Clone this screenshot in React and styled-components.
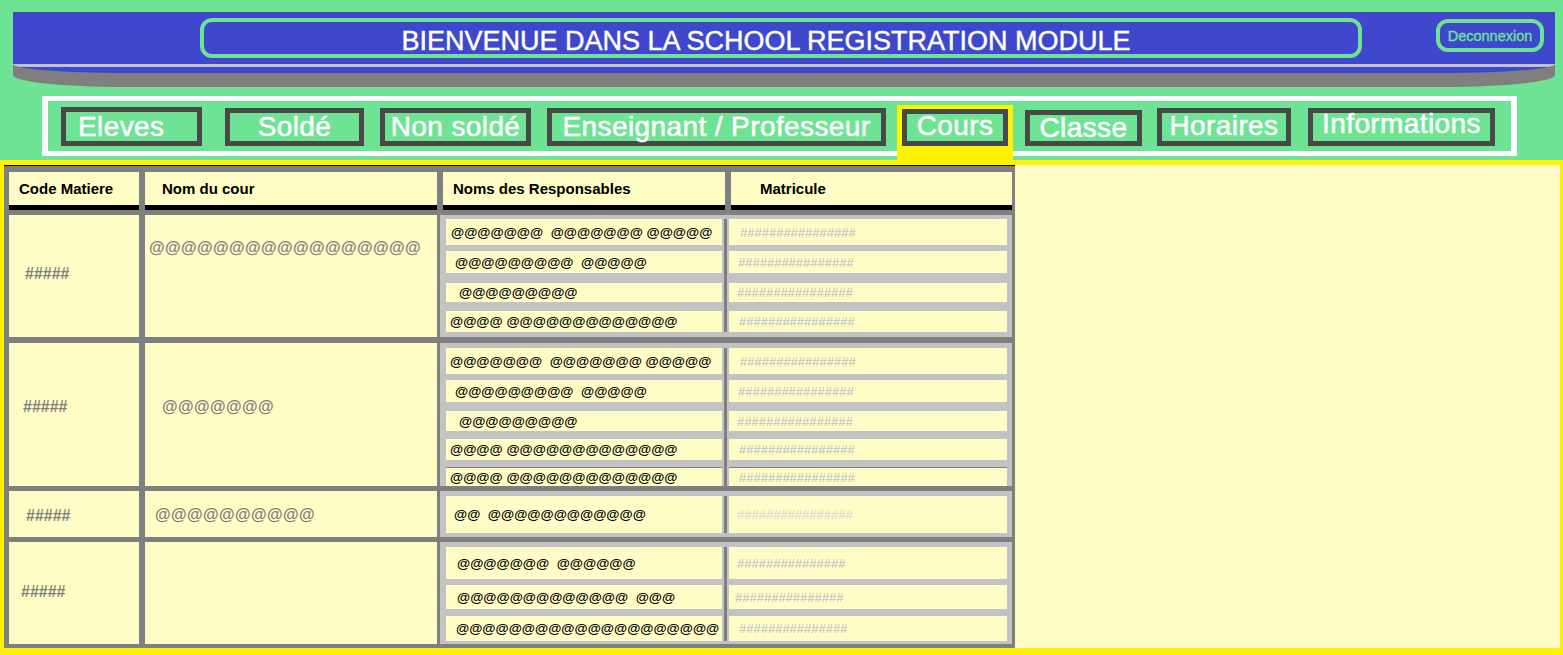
import React from 'react';
import styled, { createGlobalStyle } from 'styled-components';

const GREEN = '#6fe394';
const BLUE = '#3f48cc';
const YELLOW = '#fff200';
const CREAM = '#fffdc5';
const GRAY = '#7f7f7f';
const LIGHT = '#c3c3c3';
const DARK = '#484848';
const FONT = '"Liberation Sans", Arial, sans-serif';

const Global = createGlobalStyle`
  html, body { margin: 0; padding: 0; }
  body {
    background: ${GREEN};
    font-family: ${FONT};
    overflow: hidden;
  }
`;

const Page = styled.div`
  width: 1563px;
  height: 655px;
  display: flex;
  flex-direction: column;
`;

const HeaderShell = styled.header`
  margin: 12px 0 0 13px;
  width: 1542px;
  height: 75px;
  background: ${GRAY};
  border-radius: 0 0 110px 110px / 0 0 12px 12px;
`;

const BluePanel = styled.div`
  height: 61px;
  box-sizing: border-box;
  background: linear-gradient(
    to bottom,
    ${BLUE} 0 52px,
    ${LIGHT} 52px 55px,
    ${BLUE} 55px 61px
  );
  border-radius: 0 0 110px 110px / 0 0 9px 9px;
  display: flex;
  align-items: flex-start;
  padding: 6px 11px 0 187px;
`;

const TitlePill = styled.h1`
  margin: 0;
  width: 1162px;
  height: 40px;
  box-sizing: border-box;
  border: 4px solid ${GREEN};
  border-radius: 12px;
  display: flex;
  align-items: center;
  justify-content: center;
  padding: 6px 30px 0 0;
  color: #fff;
  font-family: ${FONT};
  font-weight: 400;
  font-size: 27px;
  -webkit-text-stroke: 0.4px #fff;
  white-space: nowrap;
`;

const LogoutPill = styled.button`
  margin: 1px 0 0 auto;
  width: 108px;
  height: 33px;
  box-sizing: border-box;
  border: 4px solid ${GREEN};
  border-radius: 12px;
  background: transparent;
  color: ${GREEN};
  font-family: ${FONT};
  font-size: 14.5px;
  -webkit-text-stroke: 0.3px ${GREEN};
  padding: 0;
  display: flex;
  align-items: center;
  justify-content: center;
`;

const Nav = styled.nav`
  margin: 9px 0 0 42px;
  width: 1475px;
  height: 60px;
  box-sizing: border-box;
  border: 5px solid #fff;
  border-left-width: 6px;
  border-right-width: 6px;
  display: flex;
  align-items: flex-end;
  padding: 0 16px 5px 13px;
`;

const NavButton = styled.button`
  flex: none;
  margin-left: ${(p) => p.$ml || 0}px;
  width: ${(p) => p.$w}px;
  height: ${(p) => p.$h}px;
  box-sizing: border-box;
  border: 5px solid ${DARK};
  background: ${GREEN};
  color: #fff;
  font-family: ${FONT};
  font-size: 28px;
  letter-spacing: 0.4px;
  -webkit-text-stroke: 0.5px #fff;
  line-height: 1;
  display: flex;
  align-items: center;
  justify-content: ${(p) => (p.$left ? 'flex-start' : 'center')};
  padding: 0 0 ${(p) => p.$up || 0}px ${(p) => (p.$left ? 12 : 0)}px;
  white-space: nowrap;
`;

const ActiveTab = styled.div`
  flex: none;
  display: flex;
  margin-left: ${(p) => p.$ml}px;
  margin-bottom: -14px;
  padding: 4px 5px 14px;
  background: ${YELLOW};
`;

const Frame = styled.main`
  margin-top: 4px;
  width: 1563px;
  height: 495px;
  box-sizing: border-box;
  border-style: solid;
  border-color: ${YELLOW};
  border-width: 5px 3px 7px 4px;
  background: ${CREAM};
  display: flex;
  align-items: flex-start;
`;

const Table = styled.div`
  width: 1011px;
  height: 483px;
  box-sizing: border-box;
  background: ${GRAY};
  border-top: 1px solid #000;
  padding: 6px 3px 4px 5px;
  display: flex;
  flex-direction: column;
`;

const HeadRow = styled.div`
  display: flex;
  gap: 6px;
`;

const HeadCell = styled.div`
  width: ${(p) => p.$w}px;
  height: 38px;
  box-sizing: border-box;
  background: ${CREAM};
  border-bottom: 5px solid #000;
  padding-left: ${(p) => p.$pl}px;
  display: flex;
  align-items: center;
  font-weight: 700;
  font-size: 15px;
  color: #000;
`;

const Row = styled.div`
  display: flex;
  height: ${(p) => p.$h}px;
  margin-top: ${(p) => p.$mt}px;
`;

const CodeCell = styled.div`
  width: 130px;
  box-sizing: border-box;
  background: ${CREAM};
  padding: ${(p) => p.$pt}px 0 0 ${(p) => p.$pl}px;
  font-weight: 700;
  font-size: 16px;
  line-height: 18px;
  color: ${GRAY};
`;

const NameCell = styled.div`
  width: 292px;
  margin-left: 6px;
  box-sizing: border-box;
  background: ${CREAM};
  padding: ${(p) => p.$pt}px 0 0 ${(p) => p.$pl}px;
  font-weight: 700;
  font-size: 16px;
  letter-spacing: 0.4px;
  line-height: 18px;
  color: ${GRAY};
  white-space: pre;
`;

const Group = styled.div`
  width: 572px;
  margin-left: 3px;
  box-sizing: border-box;
  background: ${LIGHT};
  display: flex;
  padding: 0 5px 0 6px;
`;

const Col = styled.div`
  width: ${(p) => p.$w}px;
  display: flex;
  flex-direction: column;
`;

const Divider = styled.div`
  width: 3px;
  margin: ${(p) => p.$top}px 2px ${(p) => p.$bottom}px;
  background: ${GRAY};
`;

const SubCell = styled.div`
  flex: none;
  height: ${(p) => p.$h}px;
  margin-top: ${(p) => p.$mt}px;
  box-sizing: border-box;
  background: ${CREAM};
  border-top: ${(p) => (p.$line ? `1px solid ${GRAY}` : 'none')};
  padding-left: ${(p) => p.$pl}px;
  display: flex;
  align-items: center;
  white-space: pre;
`;

const RespText = styled.span`
  font-weight: 700;
  font-size: 13.5px;
  color: #000;
`;

const MatrText = styled.span`
  font-size: 13px;
  color: ${(p) => (p.$faint ? '#d2d2de' : '#b9b9c9')};
`;

const H16 = '################';
const H15 = '###############';

const rows = [
  {
    h: 122,
    mt: 5,
    code: { pl: 16, pt: 50 },
    name: { text: '@@@@@@@@@@@@@@@@@', pl: 4, pt: 24 },
    subs: [
      { mt: 4, h: 26, r: '@@@@@@@  @@@@@@@ @@@@@', rpl: 5, m: H16, mpl: 11 },
      { mt: 6, h: 22, r: '@@@@@@@@@  @@@@@', rpl: 9, m: H16, mpl: 9 },
      { mt: 10, h: 19, r: '@@@@@@@@@', rpl: 13, m: H16, mpl: 8 },
      { mt: 9, h: 21, r: '@@@@ @@@@@@@@@@@@@', rpl: 4, m: H16, mpl: 10 },
    ],
  },
  {
    h: 143,
    mt: 6,
    code: { pl: 14, pt: 55 },
    name: { text: '@@@@@@@', pl: 17, pt: 55 },
    subs: [
      { mt: 5, h: 26, r: '@@@@@@@  @@@@@@@ @@@@@', rpl: 4, m: H16, mpl: 11 },
      { mt: 6, h: 22, r: '@@@@@@@@@  @@@@@', rpl: 9, m: H16, mpl: 9 },
      { mt: 9, h: 20, r: '@@@@@@@@@', rpl: 13, m: H16, mpl: 8 },
      { mt: 8, h: 21, r: '@@@@ @@@@@@@@@@@@@', rpl: 4, m: H16, mpl: 10 },
      { mt: 7, h: 19, r: '@@@@ @@@@@@@@@@@@@', rpl: 4, m: H16, mpl: 10, line: true },
    ],
  },
  {
    h: 46,
    mt: 5,
    code: { pl: 17, pt: 16 },
    name: { text: '@@@@@@@@@@', pl: 10, pt: 15 },
    subs: [{ mt: 5, h: 37, r: '@@  @@@@@@@@@@@@', rpl: 8, m: H16, mpl: 8, faint: true }],
  },
  {
    h: 102,
    mt: 5,
    code: { pl: 12, pt: 41 },
    name: { text: '', pl: 0, pt: 0 },
    subs: [
      { mt: 5, h: 32, r: '@@@@@@@  @@@@@@', rpl: 11, m: H15, mpl: 8 },
      { mt: 6, h: 24, r: '@@@@@@@@@@@@@  @@@', rpl: 11, m: H15, mpl: 6 },
      { mt: 7, h: 25, r: '@@@@@@@@@@@@@@@@@@@@', rpl: 10, m: H15, mpl: 10 },
    ],
  },
];

const navItems = [
  { label: 'Eleves', w: 141, h: 39, ml: 0, left: true },
  { label: 'Soldé', w: 139, h: 38, ml: 23 },
  { label: 'Non soldé', w: 151, h: 38, ml: 16 },
  { label: 'Enseignant / Professeur', w: 339, h: 38, ml: 16 },
  { label: 'Cours', w: 106, h: 37, ml: 11, active: true, up: 4 },
  { label: 'Classe', w: 117, h: 36, ml: 12 },
  { label: 'Horaires', w: 134, h: 38, ml: 15, up: 2 },
  { label: 'Informations', w: 187, h: 38, ml: 17, up: 6 },
];

function GroupBlock({ row }) {
  const used = row.subs.reduce((s, c) => s + c.mt + c.h, 0);
  const top = row.subs[0].mt;
  const bottom = row.h - used;
  return (
    <Group>
      <Col $w={276}>
        {row.subs.map((s, i) => (
          <SubCell key={i} $h={s.h} $mt={s.mt} $pl={s.rpl} $line={s.line}>
            <RespText>{s.r}</RespText>
          </SubCell>
        ))}
      </Col>
      <Divider $top={top} $bottom={bottom} />
      <Col $w={278}>
        {row.subs.map((s, i) => (
          <SubCell key={i} $h={s.h} $mt={s.mt} $pl={s.mpl} $line={s.line}>
            <MatrText $faint={s.faint}>{s.m}</MatrText>
          </SubCell>
        ))}
      </Col>
    </Group>
  );
}

export default function App() {
  return (
    <>
      <Global />
      <Page>
        <HeaderShell>
          <BluePanel>
            <TitlePill>BIENVENUE DANS LA SCHOOL REGISTRATION MODULE</TitlePill>
            <LogoutPill>Deconnexion</LogoutPill>
          </BluePanel>
        </HeaderShell>

        <Nav>
          {navItems.map((n) =>
            n.active ? (
              <ActiveTab key={n.label} $ml={n.ml}>
                <NavButton $w={n.w} $h={n.h} $up={n.up}>
                  {n.label}
                </NavButton>
              </ActiveTab>
            ) : (
              <NavButton key={n.label} $w={n.w} $h={n.h} $ml={n.ml} $left={n.left} $up={n.up}>
                {n.label}
              </NavButton>
            )
          )}
        </Nav>

        <Frame>
          <Table>
            <HeadRow>
              <HeadCell $w={130} $pl={10}>Code Matiere</HeadCell>
              <HeadCell $w={292} $pl={17}>Nom du cour</HeadCell>
              <HeadCell $w={282} $pl={10}>Noms des Responsables</HeadCell>
              <HeadCell $w={281} $pl={29}>Matricule</HeadCell>
            </HeadRow>
            {rows.map((row, i) => (
              <Row key={i} $h={row.h} $mt={row.mt}>
                <CodeCell $pl={row.code.pl} $pt={row.code.pt}>#####</CodeCell>
                <NameCell $pl={row.name.pl} $pt={row.name.pt}>{row.name.text}</NameCell>
                <GroupBlock row={row} />
              </Row>
            ))}
          </Table>
        </Frame>
      </Page>
    </>
  );
}
